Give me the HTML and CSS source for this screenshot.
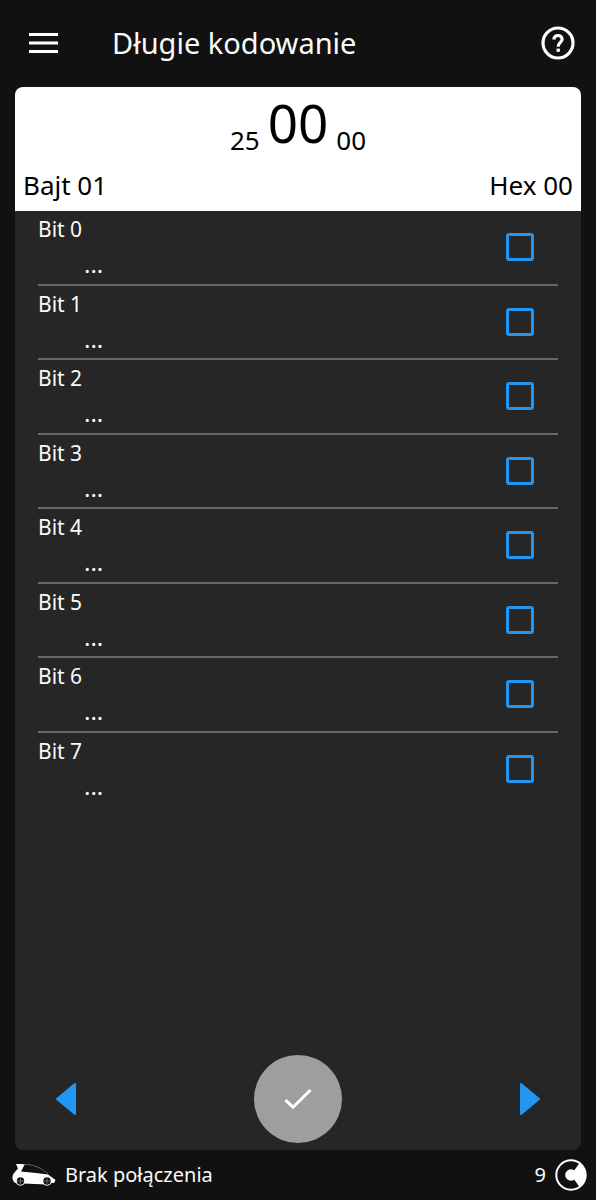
FILE: index.html
```html
<!DOCTYPE html>
<html lang="pl">
<head>
<meta charset="utf-8">
<meta name="viewport" content="width=device-width, initial-scale=1">
<title>Długie kodowanie</title>
<link rel="stylesheet" href="styles.css">
</head>
<body>
<div class="app">
  <header class="topbar">
    <button class="icon-button" type="button" aria-label="Menu">
      <svg width="30" height="20" viewBox="0 0 30 20"><path d="M0 1.5h29M0 10h29M0 18.5h29" stroke="#fff" stroke-width="2.8"/></svg>
    </button>
    <h1 class="title">Długie kodowanie</h1>
    <button class="icon-button" type="button" aria-label="Pomoc">
      <svg width="34" height="34" viewBox="0 0 34 34" fill="none" stroke="#fff"><circle cx="17" cy="17" r="15" stroke-width="3.2"/><path d="M12.9 13.5C12.9 8.2 21.1 8.2 21.1 13.2C21.1 16.5 17.2 16.5 17.2 20.8" stroke-width="3.2"/><path d="M17.2 22.6v3.2" stroke-width="3.4"/></svg>
    </button>
  </header>

  <main class="card">
    <section class="summary">
      <div class="bytes">
        <span class="byte">25</span>
        <span class="byte byte-current">00</span>
        <span class="byte">00</span>
      </div>
      <div class="labels"><span>Bajt 01</span><span>Hex 00</span></div>
    </section>

    <ul class="bits">
      <li class="bit"><label class="bit-label" for="bit0"><span>Bit 0</span><span class="bit-value">...</span></label><input class="check" type="checkbox" id="bit0"></li>
      <li class="bit"><label class="bit-label" for="bit1"><span>Bit 1</span><span class="bit-value">...</span></label><input class="check" type="checkbox" id="bit1"></li>
      <li class="bit"><label class="bit-label" for="bit2"><span>Bit 2</span><span class="bit-value">...</span></label><input class="check" type="checkbox" id="bit2"></li>
      <li class="bit"><label class="bit-label" for="bit3"><span>Bit 3</span><span class="bit-value">...</span></label><input class="check" type="checkbox" id="bit3"></li>
      <li class="bit"><label class="bit-label" for="bit4"><span>Bit 4</span><span class="bit-value">...</span></label><input class="check" type="checkbox" id="bit4"></li>
      <li class="bit"><label class="bit-label" for="bit5"><span>Bit 5</span><span class="bit-value">...</span></label><input class="check" type="checkbox" id="bit5"></li>
      <li class="bit"><label class="bit-label" for="bit6"><span>Bit 6</span><span class="bit-value">...</span></label><input class="check" type="checkbox" id="bit6"></li>
      <li class="bit"><label class="bit-label" for="bit7"><span>Bit 7</span><span class="bit-value">...</span></label><input class="check" type="checkbox" id="bit7"></li>
    </ul>

    <nav class="actions">
      <button class="icon-button" type="button" aria-label="Poprzedni bajt">
        <svg width="22" height="34" viewBox="0 0 22 34"><path d="M20 2v30L2 17z" fill="#2196f3" stroke="#2196f3" stroke-width="2" stroke-linejoin="round"/></svg>
      </button>
      <button class="confirm" type="button" aria-label="Zatwierdź">
        <svg width="28" height="22" viewBox="0 0 28 22"><path d="M1.5 12.2L9 19.2L26.5 2" fill="none" stroke="#fff" stroke-width="3"/></svg>
      </button>
      <button class="icon-button" type="button" aria-label="Następny bajt">
        <svg width="22" height="34" viewBox="0 0 22 34"><path d="M2 2v30l18-15z" fill="#2196f3" stroke="#2196f3" stroke-width="2" stroke-linejoin="round"/></svg>
      </button>
    </nav>
  </main>

  <footer class="status">
    <svg width="44" height="24" viewBox="0 0 44 24">
      <path d="M4 1H13L9 8.5L24 10L36 11.5L43.5 17L42 20H37L35 21.5L11 20.5L8 22L2.5 19.5C-.5 16 0 12.5 2.5 9.5L6 5.5z" fill="#fff"/>
      <path d="M11 1.4C21 1 30 5 36.5 11.5" fill="none" stroke="#777" stroke-width=".8"/>
      <circle cx="8.5" cy="18" r="4.7" fill="#fff"/><circle cx="35" cy="18" r="4.7" fill="#fff"/>
      <circle cx="8.5" cy="18" r="3.7" fill="#111"/><circle cx="35" cy="18" r="3.7" fill="#111"/>
      <path d="M8.5 14.5v7M5 18h7M35 14.5v7M31.5 18h7" stroke="#777" stroke-width=".8"/>
    </svg>
    <span class="connection">Brak połączenia</span>
    <span>9</span>
    <svg width="32" height="32" viewBox="0 0 32 32"><circle cx="16" cy="16" r="14.7" fill="none" stroke="#fff" stroke-width="2"/><circle cx="16" cy="16" r="5.8" fill="#fff"/><path d="M16 16L24.5 4A15 15 0 0 1 24.5 28z" fill="#fff"/></svg>
  </footer>
</div>
</body>
</html>
```

FILE: styles.css
```css
* { box-sizing: border-box; }

body {
  margin: 0;
  background: #111;
  color: #fafafa;
  font-family: "Noto Sans", "Open Sans", sans-serif;
}

button {
  padding: 0;
  border: 0;
  background: none;
  cursor: pointer;
}

svg { display: block; }

.app {
  display: flex;
  flex-direction: column;
  min-height: 100vh;
}

.topbar {
  display: flex;
  align-items: center;
  height: 87px;
  padding: 0 21px 1px 29px;
}

.title {
  flex: 1;
  margin: 0 0 0 53px;
  font-size: 29px;
  font-weight: 400;
  line-height: 40px;
}

.card {
  display: flex;
  flex: 1;
  flex-direction: column;
  margin: 0 15px;
  overflow: hidden;
  border-radius: 8px;
  background: #262626;
}

.summary {
  height: 124px;
  padding: 0 8px;
  background: #fff;
  color: #000;
}

.bytes {
  display: flex;
  align-items: flex-end;
  justify-content: center;
  gap: 8px;
  height: 79px;
}

.byte {
  padding-bottom: 8px;
  font-size: 26px;
  line-height: 36px;
}

.byte-current {
  padding-bottom: 13px;
  font-size: 53px;
  line-height: 60px;
}

.labels {
  display: flex;
  justify-content: space-between;
  font-size: 26px;
  line-height: 38px;
}

.bits {
  display: grid;
  grid-template-rows: repeat(8, 1fr);
  height: 596px;
  margin: 0;
  padding: 0 23px;
  list-style: none;
}

.bit {
  display: flex;
  align-items: center;
  padding-right: 24px;
  border-bottom: 2px solid #676767;
}

.bit:last-child { border-bottom-color: transparent; }

.bit-label {
  display: flex;
  flex: 1;
  flex-direction: column;
  gap: 7px;
  align-self: flex-start;
  padding-top: 4px;
  font-size: 21px;
  line-height: 28px;
}

.bit-value {
  padding-left: 46px;
  font-size: 24px;
}

.check {
  width: 28px;
  height: 28px;
  margin: 0;
  appearance: none;
  border: 3px solid #2196f3;
  border-radius: 3px;
}

.check:checked { background: #2196f3; }

.actions {
  display: flex;
  align-items: center;
  justify-content: space-between;
  margin-top: auto;
  padding: 0 40px 7px;
}

.confirm {
  display: grid;
  place-items: center;
  width: 88px;
  height: 88px;
  border-radius: 50%;
  background: #9e9e9e;
}

.status {
  display: flex;
  align-items: center;
  gap: 9px;
  height: 50px;
  padding: 0 9px 0 12px;
  font-size: 20px;
  line-height: 28px;
}

.connection { flex: 1; }
```
